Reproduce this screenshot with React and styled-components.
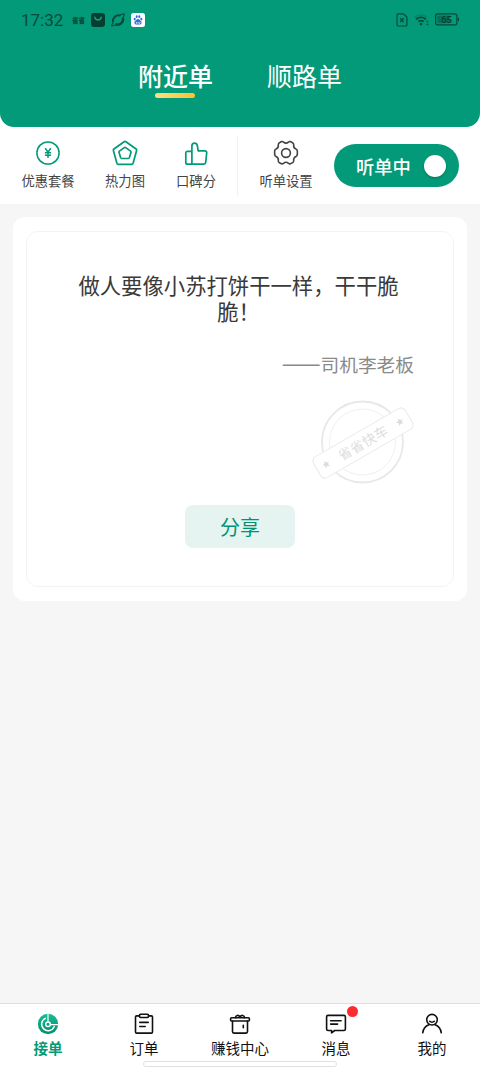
import { useState } from "react";
import styled, { createGlobalStyle } from "styled-components";

const green = "#029a78";

const GlobalStyle = createGlobalStyle`
  * {
    box-sizing: border-box;
  }
  body {
    margin: 0;
    background: #f6f6f6;
    font-family: "Noto Sans CJK SC", "Noto Sans", sans-serif;
  }
  button {
    font-family: inherit;
    border: none;
    padding: 0;
    background: none;
    cursor: pointer;
  }
  svg {
    display: block;
    flex-shrink: 0;
  }
`;

const Screen = styled.div`
  width: 480px;
  height: 1067px;
  display: flex;
  flex-direction: column;
  overflow: hidden;
  background: #f6f6f6;
`;

const Top = styled.div`
  background: #fff;
`;

const Header = styled.header`
  height: 127px;
  background: ${green};
  border-radius: 0 0 14px 14px;
`;

const StatusBar = styled.div`
  height: 39px;
  padding: 0 21px;
  display: flex;
  align-items: center;
  justify-content: space-between;
  color: #064a3b;
`;

const StatusGroup = styled.div`
  display: flex;
  align-items: center;
  gap: ${(props) => props.$gap}px;
`;

const Clock = styled.span`
  width: 45px;
  font-family: Roboto, sans-serif;
  font-size: 17px;
  line-height: 20px;
`;

const Carrier = styled.span`
  width: 13px;
  font-size: 6.5px;
  font-weight: 900;
  line-height: 10px;
  white-space: nowrap;
`;

const Tabs = styled.nav`
  display: flex;
  justify-content: center;
  gap: 54px;
  padding-top: 18px;
`;

const Tab = styled.button`
  display: flex;
  flex-direction: column;
  align-items: center;
  color: #fff;
  font-size: 25px;
  line-height: 36px;
  font-weight: ${(props) => (props.$active ? 500 : 400)};
  &::after {
    content: "";
    width: 40px;
    height: 5px;
    border-radius: 3px;
    background: ${(props) => (props.$active ? "linear-gradient(90deg, #fae187, #fbc02f)" : "transparent")};
  }
`;

const Toolbar = styled.div`
  height: 77px;
  display: flex;
  align-items: center;
  padding: 0 21px;
`;

const Tool = styled.button`
  width: ${(props) => props.$width}px;
  margin-right: ${(props) => props.$space}px;
  display: flex;
  flex-direction: column;
  align-items: center;
  gap: 5px;
  color: #444;
  font-size: 13.3px;
  line-height: 20px;
  white-space: nowrap;
`;

const Divider = styled.div`
  width: 1px;
  height: 60px;
  margin-right: 21px;
  background: #f1f1f1;
`;

const Toggle = styled.button`
  width: 125px;
  height: 43px;
  padding: 0 13px 0 22px;
  display: flex;
  align-items: center;
  justify-content: space-between;
  border-radius: 22px;
  background: ${green};
  color: #fff;
  font-size: 18.3px;
  font-weight: 500;
  line-height: 26px;
  white-space: nowrap;
`;

const Knob = styled.span`
  width: 22px;
  height: 22px;
  border-radius: 50%;
  background: #fff;
  box-shadow: 0 1px 2px rgba(0, 0, 0, 0.25);
`;

const Content = styled.main`
  flex: 1;
  padding: 13px 13px 0;
`;

const Card = styled.section`
  height: 384px;
  padding: 14px 13px;
  border-radius: 12px;
  background: #fff;
`;

const QuoteBox = styled.div`
  height: 356px;
  padding-top: 40px;
  display: flex;
  flex-direction: column;
  align-items: center;
  border: 1px solid #f3f3f3;
  border-radius: 12px;
`;

const Quote = styled.p`
  width: 324px;
  margin: 0 3px 0 0;
  color: #3a3a3a;
  font-size: 21.35px;
  line-height: 26px;
  text-align: center;
`;

const Author = styled.p`
  display: flex;
  align-self: flex-end;
  margin: 26px 39px 0 0;
  color: #8a8a8a;
  font-size: 18.7px;
  line-height: 28px;
`;

const Dash = styled.span`
  font-size: 23.2px;
  line-height: 24px;
`;

const StampRow = styled.div`
  align-self: flex-end;
  margin: 21px 37px 0 0;
`;

const ShareButton = styled.button`
  width: 110px;
  height: 43px;
  margin-top: 20px;
  padding-bottom: 1px;
  border-radius: 8px;
  background: #e5f4f0;
  color: #009272;
  font-size: 20px;
`;

const BottomNav = styled.nav`
  position: relative;
  height: 64px;
  display: grid;
  grid-template-columns: repeat(5, 96px);
  border-top: 1px solid #dedede;
  background: #fff;
`;

const NavItem = styled.button`
  display: flex;
  flex-direction: column;
  align-items: center;
  justify-content: flex-start;
  padding-top: 9px;
  gap: 2px;
  color: ${(props) => (props.$active ? green : "#111")};
  font-size: 14.5px;
  line-height: 22px;
  font-weight: ${(props) => (props.$active ? 700 : 400)};
`;

const NavIcon = styled.span`
  position: relative;
`;

const Dot = styled.span`
  position: absolute;
  top: -7px;
  right: -10.5px;
  width: 11px;
  height: 11px;
  border-radius: 50%;
  background: #fb2c30;
`;

const HomeBar = styled.div`
  position: absolute;
  left: 143px;
  bottom: 0;
  width: 194px;
  height: 6px;
  border: 1px solid #e0e0e0;
  border-radius: 3px;
  background: #fff;
`;

const MailIcon = () => (
  <svg width="14" height="14" viewBox="0 0 14 14">
    <rect width="14" height="14" rx="3" fill="#053f32" />
    <path d="M3.8 4.3c.8 3.4 5.6 3.4 6.4 0" fill="none" stroke="#1ba585" strokeWidth="1.4" strokeLinecap="round" />
  </svg>
);

const PlanetIcon = () => (
  <svg width="14" height="14" viewBox="0 0 14 14" fill="none" stroke="#064a3b">
    <path d="M2.200 9.200C1 4.800 5.400 1.200 9.600 2.600" strokeWidth="2" />
    <path d="M11.800 4.800c1.400 4.400-3.300 8.200-7.600 6.500" strokeWidth="2.400" />
    <path d="M2.300 9.800C.8 11.200.3 12.900 1 13c1 .2 3-.9 5.200-2.600M8.500 2.600C11 .9 12.900.5 13.200 1.200c.3.800-.4 2.200-1.600 3.800" strokeWidth="1.200" />
  </svg>
);

const PawIcon = () => (
  <svg width="14" height="14" viewBox="0 0 14 14">
    <rect width="14" height="14" rx="2.5" fill="#fff" />
    <g fill="#3066d6">
      <ellipse cx="3.7" cy="6.1" rx="1" ry="1.3" />
      <ellipse cx="5.7" cy="3.7" rx="1" ry="1.4" />
      <ellipse cx="8.3" cy="3.7" rx="1" ry="1.4" />
      <ellipse cx="10.3" cy="6.1" rx="1" ry="1.3" />
      <path d="M7 6c1.3 0 1.8 1.2 2.9 2.1 1.2 1.1.9 3.4-.9 3.4H5c-1.8 0-2.1-2.3-.9-3.4C5.200 7.200 5.700 6 7 6Z" />
    </g>
    <path d="M5.200 9.200h1v1.200h-1zM7.700 8.800v1.600h1.300v-1.600" fill="none" stroke="#fff" strokeWidth=".6" />
  </svg>
);

const SimIcon = () => (
  <svg width="12" height="14" viewBox="0 0 12 14" fill="none" stroke="#064a3b" strokeWidth="1.2">
    <path d="M2 .9h5.400L10.900 4v8c0 .6-.4 1-1 1H2c-.6 0-1-.4-1-1V1.900c0-.6.4-1 1-1Z" />
    <path d="m4.200 5.300 3.400 3.700m0-3.700L4.200 9" strokeWidth="1.300" />
  </svg>
);

const WifiIcon = () => (
  <svg width="15" height="13" viewBox="0 0 15 13" fill="none" stroke="#064a3b">
    <path d="M.8 4.300c3.600-3.200 8.800-3.200 12.400 0" strokeWidth="1.200" opacity=".3" />
    <path d="M2 6.300c2.900-2.500 7.100-2.500 10 0M4.300 8.700c1.600-1.400 3.800-1.400 5.400 0" strokeWidth="1.700" />
    <circle cx="7" cy="11.100" r="1.300" fill="#064a3b" stroke="none" />
    <path d="M13.400 8v1.600m0 .8V12m-1-3.200 1-1 1 1m-2 2.400 1 1 1-1" strokeWidth=".7" />
  </svg>
);

const BatteryIcon = () => (
  <svg width="24" height="13" viewBox="0 0 24 13">
    <rect x=".6" y=".9" width="21.300" height="11" rx="2.200" fill="none" stroke="#064a3b" strokeWidth="1.200" />
    <rect x="2.300" y="2.500" width="12.500" height="7.800" rx="1" fill="#067059" />
    <path d="M23.400 4.800v3.200" stroke="#064a3b" strokeWidth="1.300" />
    <text x="11.600" y="9.900" textAnchor="middle" fontFamily="Roboto, sans-serif" fontSize="9.500" fontWeight="500" fill="#053f32">
      65
    </text>
  </svg>
);

const YuanIcon = () => (
  <svg width="26" height="26" viewBox="0 0 26 26" fill="none" stroke={green} strokeWidth="1.500">
    <circle cx="13" cy="13" r="11.100" />
    <path d="m10.200 8.300 2.800 4 2.800-4M13 12.300V18M9.900 12.700h6.200M9.900 15.200h6.200" />
  </svg>
);

const HeatIcon = () => (
  <svg width="26" height="26" viewBox="0 0 26 26" fill="none" stroke={green} strokeWidth="1.700" strokeLinejoin="round">
    <path d="M12.100 1.700q.9-.6 1.800 0l10.200 7.300q.8.600.5 1.500l-3.500 12.800q-.3 1-1.400 1H6.300q-1.100 0-1.400-1L1.400 10.500q-.3-.9.5-1.500Z" />
    <path d="M12.300 7.600q.7-.5 1.400 0l4.900 3.500q.6.500.4 1.200l-1.600 5.300q-.3.900-1.200.9H9.800q-.9 0-1.200-.9L7 12.300q-.2-.7.4-1.200Z" />
  </svg>
);

const ThumbIcon = () => (
  <svg width="26" height="26" viewBox="0 0 26 26" fill="none" stroke={green} strokeWidth="1.700" strokeLinejoin="round">
    <path d="M8.900 11.300H4.500c-1.100 0-1.700.6-1.700 1.700v9.400c0 1.100.6 1.700 1.700 1.700h16.300c1.100 0 1.800-.6 1.900-1.700l1-9.600c.1-1.300-.6-2-1.800-2h-6.700l-.9-5.300c-.3-1.500-1.300-2.300-2.700-2.300-1.600 0-2.700 1.100-2.700 2.700Zm0 0v12.800" />
  </svg>
);

const GearIcon = () => (
  <svg width="26" height="26" viewBox="0 0 26 26" fill="none" stroke="#444" strokeWidth="1.600" strokeLinejoin="round">
    <path d="M8.600 1.900c.7-.3 1.300 0 1.900.5 1.500 1.200 3.500 1.200 5 0 .6-.5 1.200-.8 1.900-.5.9.4 1.900 1 2.600 1.500.6.500.8 1.100.7 1.900-.3 1.900.6 3.300 2.300 4 .8.300 1.200.9 1.300 1.700.1 1.300.1 2.700 0 4-.1.800-.5 1.400-1.300 1.700-1.700.7-2.600 2.100-2.300 4 .1.800-.1 1.400-.7 1.900-.7.500-1.700 1.100-2.600 1.500-.7.300-1.300 0-1.900-.5-1.500-1.200-3.500-1.200-5 0-.6.5-1.200.8-1.900.5-.9-.4-1.900-1-2.600-1.500-.6-.5-.8-1.100-.7-1.900.3-1.900-.6-3.300-2.300-4-.8-.3-1.200-.9-1.300-1.700-.1-1.300-.1-2.700 0-4 .1-.8.500-1.400 1.300-1.700 1.700-.7 2.600-2.100 2.300-4-.1-.8.100-1.400.7-1.900.7-.5 1.700-1.100 2.600-1.500Z" transform="translate(0 -.3)" />
    <circle cx="13" cy="13" r="4.400" />
  </svg>
);

const Stamp = () => (
  <svg width="106" height="86" viewBox="0 0 106 86">
    <circle cx="52.500" cy="43" r="40.500" fill="none" stroke="#e8e8e8" strokeWidth="1.800" />
    <circle cx="52.500" cy="43" r="33" fill="none" stroke="#f0f0f0" strokeWidth="1" />
    <g transform="rotate(-30 53 44)">
      <rect x="0" y="32" width="106" height="24" rx="5" fill="#fff" stroke="#ebebeb" strokeWidth="1.100" />
      <text x="53" y="49" textAnchor="middle" fontSize="13.500" fill="#dedede" fontFamily="Noto Sans CJK SC, sans-serif" textLength="55">
        省省快车
      </text>
      <g fill="#dcdcdc">
        <path d="m10.500 40.200 1.100 2.500 2.700.2-2.100 1.800.7 2.700-2.400-1.400-2.400 1.400.7-2.700-2.100-1.800 2.700-.2Z" />
        <path d="m95.500 40.200 1.100 2.500 2.700.2-2.100 1.800.7 2.700-2.400-1.400-2.400 1.400.7-2.700-2.100-1.800 2.700-.2Z" />
      </g>
    </g>
  </svg>
);

const RadarIcon = () => (
  <svg width="22" height="22" viewBox="0 0 22 22">
    <defs>
      <linearGradient id="radar" x1="0" y1="0" x2="0" y2="1">
        <stop offset="0" stopColor="#16bd94" />
        <stop offset="1" stopColor="#028f6e" />
      </linearGradient>
    </defs>
    <circle cx="11" cy="11" r="10.200" fill="url(#radar)" />
    <path d="M11 1v7.500M13.500 11.700h7.600" fill="none" stroke="#fff" strokeWidth="1.200" />
    <path d="M8.300 5.300a6.500 6.500 0 1 0 8.900 8.200" fill="none" stroke="#fff" strokeWidth="1.500" strokeLinecap="round" />
    <circle cx="11" cy="11.300" r="2.300" fill="#04a07c" stroke="#fff" strokeWidth="1.500" />
  </svg>
);

const OrderIcon = () => (
  <svg width="22" height="22" viewBox="0 0 22 22" fill="none" stroke="#111" strokeWidth="1.600" strokeLinejoin="round" strokeLinecap="round">
    <path d="M6.500 2.900H3.700c-.7 0-1.200.5-1.200 1.200v14.800c0 .7.500 1.200 1.200 1.200h14.600c.7 0 1.200-.5 1.200-1.200V4.100c0-.7-.5-1.200-1.200-1.200h-2.800" />
    <rect x="6.500" y="1.300" width="9" height="3.200" rx="1" />
    <path d="M6.800 9.400h8.400M6.800 13.500h5.400" />
  </svg>
);

const GiftIcon = () => (
  <svg width="22" height="22" viewBox="0 0 22 22" fill="none" stroke="#111" strokeWidth="1.600" strokeLinejoin="round" strokeLinecap="round">
    <rect x="1.600" y="4.800" width="18.800" height="3.200" rx="1" />
    <path d="M3.500 8v10.600c0 .9.600 1.500 1.500 1.500h12c.9 0 1.500-.6 1.500-1.500V8M6.400 4.600c.2-2.600 3.300-3 4.600-.6 1.300-2.400 4.400-2 4.600.6M14.300 12.300v2.500" />
  </svg>
);

const MessageIcon = () => (
  <svg width="22" height="22" viewBox="0 0 22 22" fill="none" stroke="#111" strokeWidth="1.600" strokeLinejoin="round" strokeLinecap="round">
    <path d="M3 2.400h16c.8 0 1.400.6 1.400 1.400v12.300c0 .8-.6 1.400-1.400 1.400h-9.300L6.600 19.800v-2.300H3c-.8 0-1.400-.6-1.400-1.400V3.800c0-.8.600-1.400 1.400-1.400Z" />
    <path d="M5.600 7.700h10.500M5.600 11.100h7" />
  </svg>
);

const UserIcon = () => (
  <svg width="22" height="22" viewBox="0 0 22 22" fill="none" stroke="#111" strokeWidth="1.600" strokeLinecap="round">
    <circle cx="11" cy="6.700" r="5.300" />
    <path d="M8.700 8.300c1.200 1.200 3.400 1.200 4.600 0M1.700 19.800c.6-4 2.900-6.800 6.100-8M20.300 19.800c-.6-4-2.900-6.800-6.100-8" />
  </svg>
);

const tools = [
  { label: "优惠套餐", icon: <YuanIcon />, width: 54, space: 30 },
  { label: "热力图", icon: <HeatIcon />, width: 40, space: 31 },
  { label: "口碑分", icon: <ThumbIcon />, width: 40, space: 21 },
];

const navItems = [
  { label: "接单", icon: <RadarIcon /> },
  { label: "订单", icon: <OrderIcon /> },
  { label: "赚钱中心", icon: <GiftIcon /> },
  { label: "消息", icon: <MessageIcon />, dot: true },
  { label: "我的", icon: <UserIcon /> },
];

const App = () => {
  const [tab, setTab] = useState("附近单");
  const [page, setPage] = useState("接单");

  return (
    <>
      <GlobalStyle />
      <Screen>
        <Top>
          <Header>
            <StatusBar>
              <StatusGroup $gap={6}>
                <Clock>17:32</Clock>
                <Carrier>省省</Carrier>
                <MailIcon />
                <PlanetIcon />
                <PawIcon />
              </StatusGroup>
              <StatusGroup $gap={6}>
                <SimIcon />
                <WifiIcon />
                <BatteryIcon />
              </StatusGroup>
            </StatusBar>
            <Tabs>
              {["附近单", "顺路单"].map((name) => (
                <Tab key={name} $active={tab === name} onClick={() => setTab(name)}>
                  {name}
                </Tab>
              ))}
            </Tabs>
          </Header>

          {/* Tools */}
          <Toolbar>
            {tools.map((tool) => (
              <Tool key={tool.label} $width={tool.width} $space={tool.space}>
                {tool.icon}
                {tool.label}
              </Tool>
            ))}
            <Divider />
            <Tool $width={54} $space={21}>
              <GearIcon />
              听单设置
            </Tool>
            <Toggle>
              听单中
              <Knob />
            </Toggle>
          </Toolbar>
        </Top>

        <Content>
          <Card>
            <QuoteBox>
              <Quote>做人要像小苏打饼干一样，干干脆脆！</Quote>
              <Author>
                <Dash>——</Dash>司机李老板
              </Author>
              <StampRow>
                <Stamp />
              </StampRow>
              <ShareButton>分享</ShareButton>
            </QuoteBox>
          </Card>
        </Content>

        {/* Bottom */}
        <BottomNav>
          {navItems.map((item) => (
            <NavItem key={item.label} $active={page === item.label} onClick={() => setPage(item.label)}>
              <NavIcon>
                {item.icon}
                {item.dot && <Dot />}
              </NavIcon>
              {item.label}
            </NavItem>
          ))}
          <HomeBar />
        </BottomNav>
      </Screen>
    </>
  );
};

export default App;
